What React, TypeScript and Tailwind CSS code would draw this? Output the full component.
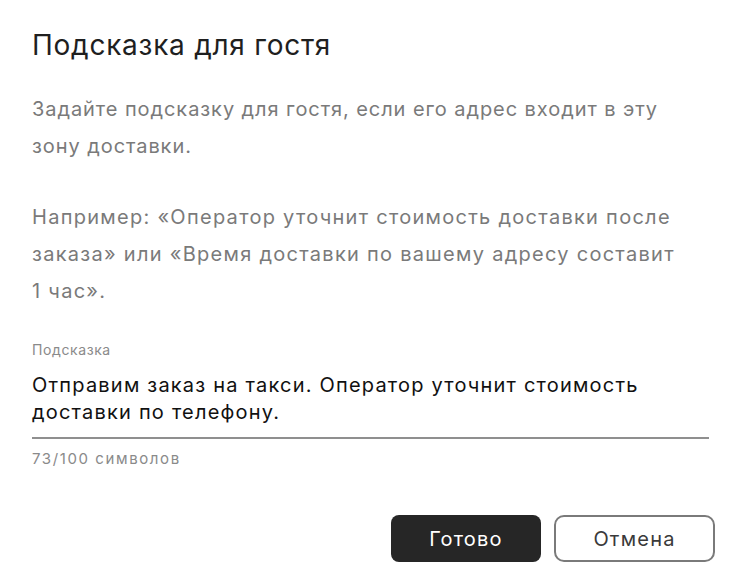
export default function App() {
  const f = { fontFamily: '"Inter", "Noto Sans", sans-serif' };
  return (
    <div className="w-[738px] h-[580px] bg-white relative overflow-hidden" style={f}>
      <div className="pl-8 pr-6 pt-[27px] flex flex-col">
        <h1 className="text-[28px] leading-[36px] text-[#1f1f1f] font-normal tracking-[0.75px]">Подсказка для гостя</h1>
        <div className="mt-[28px] text-[20px] leading-[37px] text-[#7a7a7a] tracking-[0.93px]">
          <div className="whitespace-nowrap">Задайте подсказку для гостя, если его адрес входит в эту</div>
          <div className="whitespace-nowrap">зону доставки.</div>
        </div>
        <div className="mt-[34px] text-[20px] leading-[37px] text-[#7a7a7a] tracking-[1.28px]">
          <div className="whitespace-nowrap">Например: «Оператор уточнит стоимость доставки после</div>
          <div className="whitespace-nowrap">заказа» или «Время доставки по вашему адресу составит</div>
          <div className="whitespace-nowrap">1 час».</div>
        </div>
        <div className="mt-[31px] text-[14px] leading-[18px] text-[#8a8a8a] tracking-[0.6px]">Подсказка</div>
        <div className="mt-[13px] w-[677px] border-b-2 border-[#8f8f8f] pb-[11px] text-[20px] leading-[27px] text-[#111111] tracking-[1.2px]">
          <div className="whitespace-nowrap">Отправим заказ на такси. Оператор уточнит стоимость</div>
          <div className="whitespace-nowrap">доставки по телефону.</div>
        </div>
        <div className="mt-[10px] text-[15px] leading-[20px] text-[#8a8a8a] tracking-[1.6px]">73/100 символов</div>
        <div className="mt-[46px] flex justify-end gap-[13px] pr-0 w-[683px]">
          <button className="w-[150px] h-[47px] rounded-[8px] bg-[#262626] text-white text-[20px] tracking-[1.2px]">Готово</button>
          <button className="w-[161px] h-[47px] rounded-[10px] border-2 border-[#7a7a7a] bg-white text-[#3a3a3a] text-[20px] tracking-[1.2px]">Отмена</button>
        </div>
      </div>
    </div>
  );
}
